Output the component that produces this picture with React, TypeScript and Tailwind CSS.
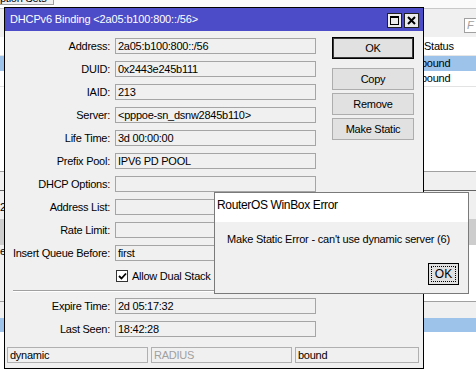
import React from "react";

const FIELDS: { label: string; value: string }[] = [
  { label: "Address", value: "2a05:b100:800::/56" },
  { label: "DUID", value: "0x2443e245b111" },
  { label: "IAID", value: "213" },
  { label: "Server", value: "<pppoe-sn_dsnw2845b110>" },
  { label: "Life Time", value: "3d 00:00:00" },
  { label: "Prefix Pool", value: "IPV6 PD POOL" },
  { label: "DHCP Options", value: "" },
  { label: "Address List", value: "" },
  { label: "Rate Limit", value: "" },
  { label: "Insert Queue Before", value: "first" },
];

const TIMES = [
  { label: "Expire Time", value: "2d 05:17:32" },
  { label: "Last Seen", value: "18:42:28" },
];

function FieldRow({ label, value }: { label: string; value: string }) {
  return (
    <>
      <div className="whitespace-nowrap text-right leading-[16px]">{label}:</div>
      <div className="h-[16px] overflow-hidden whitespace-nowrap border border-[#a5a5a5] bg-[#f0f0f0] pl-[2px] leading-[14px]">
        {value}
      </div>
    </>
  );
}

function Btn({ label, primary, className }: { label: string; primary?: boolean; className?: string }) {
  return (
    <div
      className={
        "flex h-[22px] items-center justify-center border bg-[#e1e1e1] " +
        (primary ? "border-black shadow-[inset_0_0_0_1px_#3a3a3a] " : "border-[#adadad] ") +
        (className ?? "")
      }
    >
      {label}
    </div>
  );
}

export default function App() {
  return (
    <div className="relative h-[375px] w-[476px] overflow-hidden bg-white font-['Liberation_Sans',Arial,sans-serif] text-[11px] tracking-[-0.25px] text-black">
      {/* list windows behind the dialog */}
      <div className="flex flex-col">
        <div className="flex h-[9px] border-b border-[#c8c8c8]">
          <div className="h-[5px] w-[54px] overflow-hidden border-b border-r border-[#a0a0a0] bg-[#f0f0f0]">
            <div className="-mt-[8px] leading-[13px]">ption Sets</div>
          </div>
          <div className="flex-1 bg-[#fafafa]" />
        </div>
        <div className="flex h-[28px]">
          <div className="w-[4px] bg-white" />
          <div className="flex flex-1 items-start bg-[#f0f0f0] pl-[464px] pt-[9px]">
            <div className="h-[15px] w-[30px] border border-[#a0a0a0] bg-white pl-[2px] text-[11px] italic leading-[13px] text-[#a0a0a0]">
              F
            </div>
          </div>
        </div>
        <div className="h-[19px] border-b border-[#e6e6e6] bg-white pl-[424px] leading-[18px]">Status</div>
        <div className="h-[15px] bg-[#9dc3ea] pl-[421px] leading-[15px]">bound</div>
        <div className="h-[16px] border-b border-[#e3e3e3] bg-white pl-[421px] leading-[15px]">bound</div>
        <div className="h-[85px] border-b border-[#a0a0a0] bg-white" />
        <div className="h-[19px] border-b border-[#646464] bg-[#f0f0f0]" />
        <div className="flex h-[28px] bg-[#f0f0f0]">
          <div className="w-[4px] pt-[10px] leading-[13px]">2</div>
        </div>
        <div className="h-[26px] bg-[#cdcdcd]" />
        <div className="flex h-[57px] border-b border-[#a0a0a0] bg-white">
          <div className="w-[4px] bg-[#f0f0f0] leading-[13px]">e</div>
        </div>
        <div className="h-[16px] bg-[#f0f0f0]" />
        <div className="h-[14px] bg-[#9dc3ea]" />
        <div className="h-[40px] bg-white" />
      </div>

      {/* DHCPv6 binding window */}
      <div className="absolute left-[4px] top-[7px] flex h-[362px] w-[420px] flex-col border border-black bg-[#f0f0f0]">
        <div className="flex h-[23px] items-center justify-between bg-[#4c4cc8] pl-[5px] pr-[4px] text-white tracking-[-0.15px]">
          <span className="whitespace-nowrap">DHCPv6 Binding &lt;2a05:b100:800::/56&gt;</span>
          <div className="flex gap-[2px] pt-[1px]">
            <div className="flex h-[15px] w-[15px] items-center justify-center border border-[#202020] bg-[#ececec]">
              <div className="h-[9px] w-[9px] border border-t-2 border-black" />
            </div>
            <div className="flex h-[15px] w-[15px] items-center justify-center border border-[#202020] bg-[#ececec]">
              <svg width="9" height="9" viewBox="0 0 9 9">
                <path d="M1 1L8 8M8 1L1 8" stroke="#000" strokeWidth="2" />
              </svg>
            </div>
          </div>
        </div>

        <div className="flex flex-1 flex-col">
          <div className="flex">
            <div className="flex w-[311px] flex-col pt-[7px]">
              <div className="grid grid-cols-[105px_201px] gap-x-[5px] gap-y-[7px]">
                {FIELDS.map((f) => (
                  <FieldRow key={f.label} label={f.label} value={f.value} />
                ))}
              </div>
              <div className="mt-[9px] flex h-[12px] items-center pl-[111px]">
                <div className="flex h-[12px] w-[12px] items-center justify-center border border-[#333] bg-white">
                  <svg width="9" height="8" viewBox="0 0 9 8">
                    <path d="M1 4L3.5 6.5L8 1.5" fill="none" stroke="#000" strokeWidth="1.8" />
                  </svg>
                </div>
                <span className="ml-[4px] whitespace-nowrap">Allow Dual Stack</span>
              </div>
            </div>
            <div className="ml-[16px] flex w-[82px] flex-col pt-[6px]">
              <Btn label="OK" primary />
              <Btn label="Copy" className="mt-[9px]" />
              <Btn label="Remove" className="mt-[3px]" />
              <Btn label="Make Static" className="mt-[3px]" />
            </div>
          </div>

          <div className="ml-[8px] mr-[8px] mt-[8px] h-[2px] border-b border-t border-b-white border-t-[#a0a0a0]" />

          <div className="mt-[6px] grid w-[311px] grid-cols-[105px_201px] gap-x-[5px] gap-y-[7px]">
            {TIMES.map((f) => (
              <FieldRow key={f.label} label={f.label} value={f.value} />
            ))}
          </div>

          <div className="ml-[2px] mr-[4px] mt-[10px] flex h-[16px] gap-[3px]">
            <div className="w-[141px] border border-[#b0b0b0] pl-[2px] leading-[14px]">dynamic</div>
            <div className="w-[141px] border border-[#b0b0b0] pl-[2px] leading-[14px] text-[#a0a0a0]">RADIUS</div>
            <div className="flex-1 border border-[#b0b0b0] pl-[2px] leading-[14px]">bound</div>
          </div>
        </div>
      </div>

      {/* error message box */}
      <div className="absolute left-[214px] top-[192px] flex h-[102px] w-[255px] flex-col border border-[#7a7a7a] bg-[#f0f0f0] tracking-normal">
        <div className="h-[29px] bg-white pl-[2px] pt-[5px] text-[12px] leading-[14px] tracking-[-0.35px]">
          RouterOS WinBox Error
        </div>
        <div className="pl-[12px] pt-[11px] leading-[13px] tracking-[-0.2px] whitespace-nowrap">
          Make Static Error - can't use dynamic server (6)
        </div>
        <div className="mt-[17px] flex justify-end pr-[9px]">
          <div className="flex h-[22px] w-[31px] items-center justify-center border border-black bg-[#e1e1e1] p-[2px]">
            <div className="flex h-full w-full items-center justify-center border border-dotted border-black text-[12px]">
              OK
            </div>
          </div>
        </div>
      </div>
    </div>
  );
}
